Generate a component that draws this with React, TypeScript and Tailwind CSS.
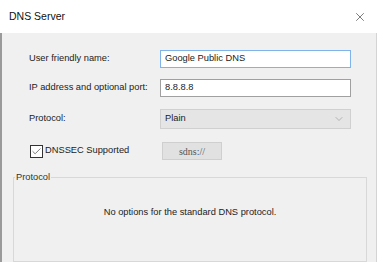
import { X, ChevronDown, Check } from "lucide-react";

export default function App() {
  return (
    <div className="w-[377px] h-[262px] overflow-hidden bg-white flex flex-col font-['Liberation_Sans',sans-serif] text-[9.3px] text-[#222]">
      {/* Title bar */}
      <div className="h-[33px] flex items-center justify-between pl-[9px] pr-[10px] shrink-0">
        <span className="text-[10.5px] text-[#111]">DNS Server</span>
        <X size={14} strokeWidth={1.1} className="text-[#333]" />
      </div>

      {/* Body */}
      <div className="flex-1 bg-[#f0f0f0] border-l-2 border-r border-l-[#9a9a9a] border-r-[#d4d4d4] flex flex-col pt-[17px] pl-[27px]">
        <div className="flex items-center h-[18px]">
          <span className="w-[131px]">User friendly name:</span>
          <div className="w-[191px] h-[18px] border border-[#7eb4ea] bg-white flex items-center px-[4px]">
            Google Public DNS
          </div>
        </div>

        <div className="flex items-center h-[18px] mt-[11px]">
          <span className="w-[131px]">IP address and optional port:</span>
          <div className="w-[191px] h-[18px] border border-[#a0a0a0] bg-white flex items-center px-[4px]">
            8.8.8.8
          </div>
        </div>

        <div className="flex items-center h-[20px] mt-[12px]">
          <span className="w-[131px]">Protocol:</span>
          <div className="w-[191px] h-[20px] border border-[#d0d0d0] bg-[#e5e5e5] flex items-center justify-between pl-[4px] pr-[5px]">
            <span>Plain</span>
            <ChevronDown size={12} strokeWidth={1.1} className="text-[#888]" />
          </div>
        </div>

        <div className="flex items-center h-[18px] mt-[13px]">
          <div className="w-[131px] flex items-center pl-[1px]">
            <div className="w-[13px] h-[13px] border border-[#333] bg-white flex items-center justify-center mr-[2px]">
              <Check size={11} strokeWidth={1.4} className="text-[#333]" />
            </div>
            <span>DNSSEC Supported</span>
          </div>
          <div className="ml-[2px] w-[60px] h-[18px] border border-[#cfcfcf] bg-[#e1e1e1] flex items-center justify-center font-['Liberation_Serif',serif] text-[10px] text-[#555]">
            sdns://
          </div>
        </div>

        {/* Group box */}
        <fieldset className="mt-[11px] -ml-[16px] mr-[9px] flex-1 border border-[#d8d8d8] pb-[40px]">
          <legend className="ml-[1px] px-px text-[9.3px] text-[#333]">Protocol</legend>
          <div className="text-center pt-[21px]">No options for the standard DNS protocol.</div>
        </fieldset>
      </div>
    </div>
  );
}
